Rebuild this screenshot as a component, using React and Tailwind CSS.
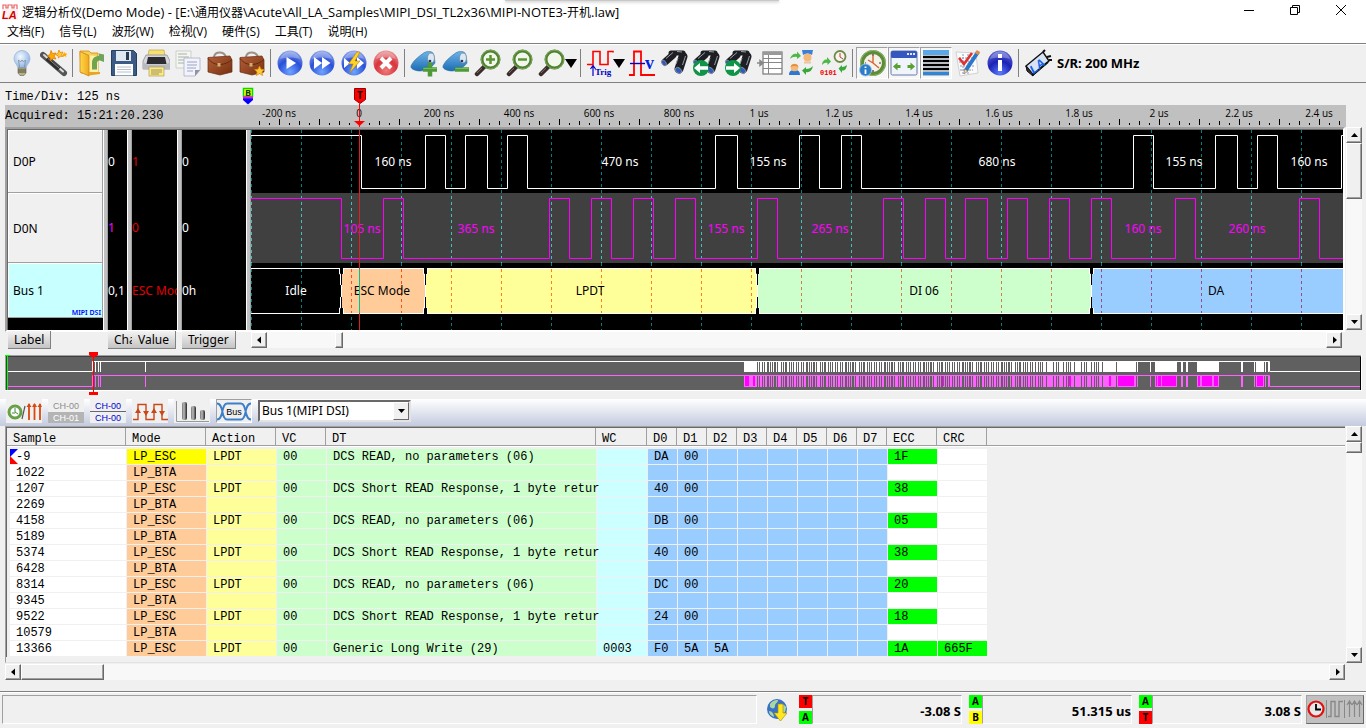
import { useState } from "react";

const UI = "font-['Open_Sans','Noto_Sans_CJK_SC',sans-serif]";
const MONO = "font-['Liberation_Mono','Noto_Sans_CJK_SC',monospace]";
const TAHOMA = "font-['Noto_Sans','Noto_Sans_CJK_SC',sans-serif]";
const RAISED = "border border-t-white border-l-white border-r-[#696969] border-b-[#696969] bg-[#f0f0f0]";
const SUNKEN = "border border-t-[#a0a0a0] border-l-[#a0a0a0] border-r-white border-b-white";

const Defs = () => (
    <svg width="0" height="0" className="absolute" aria-hidden="true">
        <defs>
            <radialGradient id="blueBall" cx="50%" cy="85%" r="85%">
                <stop offset="0" stopColor="#6fa4ff" />
                <stop offset="0.55" stopColor="#2a4fd8" />
                <stop offset="1" stopColor="#8ea6e8" />
            </radialGradient>
            <radialGradient id="redBall" cx="50%" cy="80%" r="85%">
                <stop offset="0" stopColor="#f07a7a" />
                <stop offset="0.5" stopColor="#d8343c" />
                <stop offset="1" stopColor="#eba0a4" />
            </radialGradient>
            <radialGradient id="infoBall" cx="50%" cy="90%" r="95%">
                <stop offset="0" stopColor="#5a7cff" />
                <stop offset="0.5" stopColor="#1c22b4" />
                <stop offset="1" stopColor="#6a74d8" />
            </radialGradient>
            <linearGradient id="brown" x1="0" y1="0" x2="1" y2="1">
                <stop offset="0" stopColor="#b5603a" />
                <stop offset="1" stopColor="#74300f" />
            </linearGradient>
            <linearGradient id="folder" x1="0" y1="0" x2="1" y2="0">
                <stop offset="0" stopColor="#ffd84a" />
                <stop offset="1" stopColor="#f0a81c" />
            </linearGradient>
            <linearGradient id="tag" x1="0" y1="0" x2="0" y2="1">
                <stop offset="0" stopColor="#6db3e8" />
                <stop offset="1" stopColor="#1c6cb4" />
            </linearGradient>
            <radialGradient id="bulb" cx="40%" cy="35%" r="70%">
                <stop offset="0" stopColor="#f4f9ff" />
                <stop offset="1" stopColor="#86aee0" />
            </radialGradient>
            <linearGradient id="bar" x1="0" y1="0" x2="1" y2="0">
                <stop offset="0" stopColor="#777" />
                <stop offset="0.4" stopColor="#bbb" />
                <stop offset="1" stopColor="#222" />
            </linearGradient>
        </defs>
    </svg>
);

const Icon = ({ children, w = 28, h = 28 }) => (
    <svg width={w} height={h} viewBox={`0 0 ${w} ${h}`} className="shrink-0" aria-hidden="true">{children}</svg>
);

const BulbIcon = () => (
    <Icon>
        <path d="M14 1.500a8 8 0 0 1 8 8c0 4-3 5.500-4 9.500h-8c-1-4-4-5.500-4-9.500a8 8 0 0 1 8-8z" fill="url(#bulb)" stroke="#9ab6da" strokeWidth="0.8" />
        <path d="M11.500 18l-1-7 2 2 1.500-2 1.500 2 2-2-1 7" fill="none" stroke="#7a8c9c" strokeWidth="0.8" />
        <path d="M10 19h8v5l-2 2.500h-4L10 24z" fill="#b8b088" stroke="#77755a" strokeWidth="0.7" />
        <path d="M10 21h8M10 23h8" stroke="#4d4c3c" strokeWidth="1" />
    </Icon>
);

const WandIcon = () => (
    <Icon>
        <path d="M3 6L24 24" stroke="#555" strokeWidth="6" strokeLinecap="round" />
        <path d="M4 6L23 22.500" stroke="#ddd" strokeWidth="2" strokeLinecap="round" />
        <path d="M7 9.500l12 10.500" stroke="#2c2c2c" strokeWidth="4" />
        <path d="M8 9.500l11 9.500" stroke="#8a8a8a" strokeWidth="1" />
        <path d="M11 1.500l1.500 3 3.500-.5-2 3 2 3-3.500-.500-2 2.500-.500-3.500-3-1.500 3-1.500z" fill="#ffa800" stroke="#e07c00" strokeWidth="0.8" />
        <path d="M19 1l1 2.500 3-.5-1.500 2.500 1.500 2-3-.3-1.500 2-.5-2.500-2.500-1 2.500-1.500z" fill="#ffc83c" stroke="#e88a00" strokeWidth="0.8" />
        <path d="M24.500 3l1 1.500 2 .3-1.500 1.300.3 2-1.800-1-1.800 1 .3-2-1-1.500 2-.1z" fill="#ffa800" />
    </Icon>
);

const OpenIcon = () => (
    <Icon>
        <path d="M2 2h9l2 2h7v20H3z" fill="#f7cf52" stroke="#d08c10" strokeWidth="0.8" />
        <path d="M7 6l13 1v16l-13 2z" fill="#fff0a8" />
        <path d="M2 2.500l9 4v20.500l-9-4z" fill="url(#folder)" stroke="#c98512" strokeWidth="0.8" />
        <path d="M11 23h11v2l-11 1.500z" fill="#eaa420" />
        <path d="M14 14c0-6 4-7 7-7V4.500l5 1V13l-4-1.500c-3 0-3 2-3 4v5h-5z" fill="#57983e" opacity="0.85" />
    </Icon>
);

const SaveIcon = () => (
    <Icon>
        <path d="M1.500 1.500h22l3 3v22h-25z" fill="#3c5a84" stroke="#24405f" strokeWidth="1" />
        <rect x="6" y="2" width="15" height="10" fill="#dfe7f0" />
        <rect x="16" y="3" width="3" height="8" fill="#2a3c54" />
        <rect x="5" y="15" width="18" height="11.500" fill="#fdfdfd" />
        <path d="M7 18h14M7 20.500h14M7 23h14" stroke="#b8c2cc" strokeWidth="1" />
    </Icon>
);

const PrinterIcon = () => (
    <Icon>
        <path d="M7 1h15l1 6H6z" fill="#f6df73" stroke="#b89a30" strokeWidth="0.6" />
        <path d="M4 6h21l3 6v8H1v-8z" fill="#d6d6da" stroke="#8e8e94" strokeWidth="0.8" />
        <path d="M6 8h17l1.500 7H4.500z" fill="#2b2d33" />
        <path d="M1 13v7h27v-7l-4 2.500H5z" fill="#b9bac0" />
        <rect x="7" y="18" width="15" height="9" fill="#f8e888" stroke="#a8924a" strokeWidth="0.6" />
        <path d="M9 21h11M9 23h11M9 25h8" stroke="#8a8248" strokeWidth="0.8" />
    </Icon>
);

const CopyIcon = () => (
    <Icon>
        <path d="M2 2h15v17H2z" fill="#f4f6f2" stroke="#c4c8c0" strokeWidth="0.8" />
        <path d="M4 5h9M4 8h11M4 11h8M4 14h8" stroke="#aab0a8" strokeWidth="1" />
        <path d="M10 9h16v12l-5 6H10z" fill="#f3f4fb" stroke="#a8aec8" strokeWidth="0.8" />
        <path d="M13 13h10M13 16h10M13 19h9M13 22h6" stroke="#9aa2c4" strokeWidth="1" />
        <path d="M26 21h-5v6z" fill="#8f94a4" />
    </Icon>
);

const BriefcaseIcon = ({ star }) => (
    <Icon>
        <path d="M8 8c1-6 10-6 12 0" fill="none" stroke="#9c9088" strokeWidth="2" />
        <path d="M2 8.500l22-1.500 2 4v12l-12 3-12-3z" fill="url(#brown)" stroke="#6a2c10" strokeWidth="0.7" />
        <path d="M2 9.500c4 5 8 6 12 6s9-2 12-5" fill="none" stroke="#60260c" strokeWidth="0.9" />
        <rect x="11.500" y="14" width="3" height="3.500" fill="#cfb070" />
        {star && <path d="M21.500 17l1.500 3.200 3.500.3-2.600 2.400.8 3.600-3.200-1.900-3.200 1.900.8-3.600-2.600-2.400 3.500-.3z" fill="#ffc83a" stroke="#d88a00" strokeWidth="0.7" />}
    </Icon>
);

const Ball = ({ fill = "url(#blueBall)", children }) => (
    <Icon>
        <circle cx="14" cy="14" r="12.500" fill={fill} />
        <path d="M4 10c3-10 17-10 20 0-6-2-14-2-20 0z" fill="#fff" opacity="0.28" />
        {children}
    </Icon>
);

const TagIcon = ({ plus }) => (
    <Icon>
        <path d="M1 17c2-5 7-9 12-12.500 3-2.500 8-2.500 10-.5 1 1 2 8 2 10-3 4-8 8-15 8-4 0-10-2-9-5z" fill="url(#tag)" stroke="#2d6fa8" strokeWidth="0.6" />
        <ellipse cx="21" cy="9" rx="3.500" ry="5" fill="#d8e8f4" stroke="#7d8d9c" strokeWidth="0.8" />
        <circle cx="20" cy="12" r="1.300" fill="#335" />
        <path d="M13 20.500h14" stroke="#4f9a38" strokeWidth="4.500" />
        {plus && <path d="M20 13.500v14" stroke="#4f9a38" strokeWidth="4.500" />}
        <path d="M13.500 19.500h13" stroke="#79bb5a" strokeWidth="1" />
    </Icon>
);

const ZoomIcon = ({ sign }) => (
    <Icon>
        <path d="M3 25l8-8" stroke="#3a2d2a" strokeWidth="4.500" strokeLinecap="round" />
        <path d="M3 24l5-5" stroke="#7c6a64" strokeWidth="1" />
        <circle cx="16.500" cy="10.500" r="8.500" fill="#f2f7ec" stroke="#4e8030" strokeWidth="3" />
        <circle cx="16.500" cy="10.500" r="9.300" fill="none" stroke="#85b065" strokeWidth="0.8" />
        {sign && <path d={sign === "+" ? "M12 10.500h9M16.500 6v9" : "M12 10.500h9"} stroke="#5b9434" strokeWidth="2.500" />}
    </Icon>
);

const TrigIcon = () => (
    <Icon>
        <path d="M1 15.500h6V2.500h7v13h8V2.500h5v1" fill="none" stroke="#f00" strokeWidth="1.600" />
        <path d="M7 27V17M4.500 20L7 16.500 9.500 20" fill="none" stroke="#0000c8" strokeWidth="1.200" />
        <text x="9" y="26" fontSize="9" fontWeight="bold" fill="#0000c8" className="font-['Liberation_Serif',serif]">Trig</text>
    </Icon>
);

const VoltIcon = () => (
    <Icon>
        <path d="M1 26h5V2.500h7V26h14" fill="none" stroke="#f00" strokeWidth="1.800" />
        <path d="M2 14.500h15" stroke="#0000c8" strokeWidth="1.400" />
        <text x="17" y="20" fontSize="18" fontWeight="bold" fill="#0020e0" className="font-['Liberation_Serif',serif]">v</text>
    </Icon>
);

const BinocularIcon = ({ dir }) => (
    <Icon>
        <path d="M13 6L5 13" stroke="#1d1f24" strokeWidth="7" strokeLinecap="round" />
        <path d="M11 4h12" stroke="#1d1f24" strokeWidth="5" strokeLinecap="round" />
        <path d="M23 7.500L19 20" stroke="#1d1f24" strokeWidth="9" strokeLinecap="round" />
        <path d="M13 3.500L6 9.500M17 2.500l5 .5M25.500 7l-3 9M18 9l-2 6" stroke="#9aa0a8" strokeWidth="1" fill="none" />
        <ellipse cx="4" cy="14" rx="2" ry="3.200" transform="rotate(-35 4 14)" fill="#3858b8" stroke="#9aa" strokeWidth="0.6" />
        <ellipse cx="18.500" cy="21.500" rx="2.600" ry="3.600" transform="rotate(-50 18.500 21.500)" fill="#3858b8" stroke="#9aa" strokeWidth="0.7" />
        {dir && (
            <>
                <circle cx="9" cy="19" r="8" fill="#0f9448" />
                <path d={dir === "left" ? "M2 19l6-5v3.200h8v3.600H8V24z" : "M16 19l-6-5v3.200H2v3.600h8V24z"} fill="#fff" />
            </>
        )}
    </Icon>
);

const TableIcon = () => (
    <Icon>
        <rect x="7" y="3" width="19" height="22" fill="#fff" stroke="#777" strokeWidth="1.200" />
        <path d="M7 4.500h19" stroke="#999" strokeWidth="3" />
        <path d="M7 9.500h19M7 13.500h19M7 19.500h19M12.500 6v19" stroke="#888" strokeWidth="1" />
        <path d="M1 14h4M4 11.500L7 14l-3 2.500z" stroke="#888" fill="#888" strokeWidth="1.500" />
    </Icon>
);

const Person = ({ x, y }) => (
    <g transform={`translate(${x} ${y})`}>
        <path d="M0 12c0-4 2-5 5.500-5S11 8 11 12z" fill="#2f78d0" />
        <circle cx="5.500" cy="4.500" r="3.800" fill="#f6b878" />
        <path d="M1.500 4C2 0 9 0 9.500 4 7 2.500 4 2.500 1.500 4z" fill="#e09040" />
    </g>
);

const UsersIcon = () => (
    <Icon>
        <path d="M14 1h11l-1 5c-3-2-6-2-9 0z" fill="#3a80d8" />
        <circle cx="19.500" cy="8.500" r="4" fill="#f6b878" />
        <path d="M16 12.500h7v2h-7z" fill="#e9c49c" />
        <Person x={1} y={14} />
        <path d="M2 10c1-4 4-6 7-5V2.500L13 7l-4 3V8C6 7.500 4 8.500 2 10z" fill="#4db848" />
        <path d="M25 17c-1 5-4 7-7 6v3l-4-4.500 4-3.500v2c3 0 5-1 7-3z" fill="#3aa838" />
    </Icon>
);

const ClockDataIcon = () => (
    <Icon>
        <circle cx="20" cy="7.500" r="5.500" fill="#f6f6ee" stroke="#6a8c48" strokeWidth="1.800" />
        <path d="M20 4v4l3 2" fill="none" stroke="#c33" strokeWidth="1" />
        <path d="M2 16c0-4 3-6 5-5.500V8l4 4.500L7.500 16v-2C5 13.500 4 14 2 16z" fill="#4db848" />
        <path d="M27 16c-1 5-3 6-5 5.500V24l-3.500-4.500L22 16v2c2 0 3-1 5-2z" fill="#3aa838" />
        <text x="0" y="26" fontSize="7" fontWeight="bold" fill="#e00" className="font-['Liberation_Mono',monospace]">0101</text>
    </Icon>
);

const ClockInfoIcon = () => (
    <Icon>
        <circle cx="15" cy="14" r="11" fill="#f4f2e8" stroke="#5c8c38" strokeWidth="4" />
        <circle cx="15" cy="14" r="12.500" fill="none" stroke="#9cc078" strokeWidth="0.8" />
        <path d="M15 6v8l6 5M15 14l-5-3" fill="none" stroke="#d86038" strokeWidth="1.400" />
        <path d="M15 5v1.500M23 14h-2M7 14h1M15 21v2" stroke="#333" strokeWidth="1.200" />
        <circle cx="7.500" cy="21" r="6" fill="#2d7cc8" stroke="#9cc6ec" strokeWidth="0.8" />
        <path d="M7.500 17.500v1.500M7.500 20.500v4.500" stroke="#fff" strokeWidth="1.800" />
    </Icon>
);

const WindowIcon = () => (
    <Icon>
        <rect x="1" y="2" width="26" height="24" rx="1.500" fill="#f0f4fb" stroke="#6878a8" strokeWidth="1" />
        <rect x="1" y="2" width="26" height="7" rx="1.500" fill="#3558c0" />
        <path d="M17 5h2M20 5h2M23 5h2" stroke="#dfe8ff" strokeWidth="2" />
        <path d="M3 17.500l4.500-4v2.500h3v3h-3v2.500zM25 17.500l-4.500-4v2.500h-3v3h3v2.500z" fill="#58a030" />
    </Icon>
);

const StripeIcon = () => (
    <Icon>
        <rect x="1" y="1" width="26" height="26" fill="#b8bcc0" />
        <rect x="1" y="1" width="26" height="5" fill="#5aa8e8" />
        <path d="M1 8h26M1 12h26M1 16h26M1 20h26" stroke="#000" strokeWidth="2" />
        <path d="M1 24.500h26" stroke="#2e86d8" strokeWidth="3" />
    </Icon>
);

const CheckNoteIcon = () => (
    <Icon>
        <path d="M2 3l20 1 2 20-18 3z" fill="#fafafa" stroke="#c8c8cc" strokeWidth="0.8" />
        <path d="M5 9h14M5 13h15M6 17h14M6 21h13M9 5v20M14 5v20" stroke="#8c96b0" strokeWidth="1" strokeDasharray="2 1" />
        <path d="M5 9l5 6 8-11" fill="none" stroke="#e03030" strokeWidth="2.600" />
        <path d="M24 3L12 21" stroke="#2a78c8" strokeWidth="4" />
        <path d="M24.500 2l-2 3" stroke="#e08a50" strokeWidth="4" />
        <path d="M10.500 20l3.500 2-4 3z" fill="#f4d8a0" stroke="#555" strokeWidth="0.5" />
    </Icon>
);

const ChipIcon = () => (
    <Icon>
        <path d="M2 17L19 3l6 9-16 14z" fill="#d8e2f4" stroke="#111" strokeWidth="1.400" />
        <path d="M2 17l1 5 6 5V25z" fill="#334" stroke="#111" strokeWidth="1" />
        <path d="M19 3l2-2M25 11h3M23 8l4-1M8 26.500l16-13.500" stroke="#111" strokeWidth="2" />
        <text x="5" y="22" fontSize="12" fontWeight="bold" fontStyle="italic" fill="#1060e8" transform="rotate(-38 12 17)" className="font-['Liberation_Sans',sans-serif]">LA</text>
    </Icon>
);

const ToolButton = ({ label, pressed, children, arrow }) => (
    <button
        type="button"
        aria-label={label}
        className={`h-8 shrink-0 flex items-center ${arrow ? "w-[42px] pl-[2px]" : "w-8 justify-center"} ${pressed ? "border border-t-[#a0a0a0] border-l-[#a0a0a0] border-r-white border-b-white bg-[#f6f6f6]" : ""}`}
    >
        {children}
        {arrow && <svg width="12" height="9" className="shrink-0 -ml-px" aria-hidden="true"><path d="M0 0h12L6 9z" fill="#000" /></svg>}
    </button>
);

const ToolSep = () => <div className="w-[6px] h-7 shrink-0 pl-[2px]"><div className="w-px h-full bg-[#808080]" /></div>;

const ARROWS = {
    up: "M0 5h7L3.500 1z",
    down: "M0 1h7L3.500 5z",
    left: "M5 -0.500v7L1 3z",
    right: "M2 -0.500v7L6 3z",
};

const ScrollArrow = ({ dir }) => (
    <button type="button" aria-label={`Scroll ${dir}`} className={`size-4 shrink-0 flex items-center justify-center shadow-[inset_-1px_-1px_#a0a0a0] ${RAISED}`}>
        <svg width="7" height="6" aria-hidden="true" className="overflow-visible"><path d={ARROWS[dir]} fill="#000" /></svg>
    </button>
);

const Thumb = ({ className }) => <div className={`shrink-0 shadow-[inset_-1px_-1px_#a0a0a0] ${RAISED} ${className}`} />;

const MENUS = ["文档(F)", "信号(L)", "波形(W)", "检视(V)", "硬件(S)", "工具(T)", "说明(H)"];

const TitleBar = () => (
    <header className="bg-white relative">
        <div className="absolute top-0 left-[37%] w-1/5 h-px bg-[#c8c8c8] shadow-[0_1px_3px_#999]" />
        <div className="flex items-center h-6">
            <svg width="16" height="16" viewBox="0 0 16 16" className="ml-[2px] mr-1 shrink-0" aria-hidden="true">
                <path d="M1 5V1h3v3h2V1h4v3h2V1h3v4" fill="none" stroke="#e86060" strokeWidth="1.200" />
                <rect x="0" y="5" width="16" height="11" fill="#fff0f0" />
                <text x="0" y="15" fontSize="11" fontStyle="italic" fontWeight="bold" fill="#d00000" className="font-['Liberation_Sans',sans-serif]">LA</text>
            </svg>
            <h1 className={`${UI} text-[13px] leading-5 whitespace-nowrap`}>
                <span className="text-xs">逻辑分析仪</span>(Demo Mode) - [E:\<span className="text-xs">通用仪器</span>\Acute\All_LA_Samples\MIPI_DSI_TL2x36\MIPI-NOTE3-<span className="text-xs">开机</span>.law]
            </h1>
            <div className="ml-auto flex -mt-1 mr-[2px]">
                <button type="button" aria-label="Minimize" className="w-[46px] h-5 flex items-center justify-center">
                    <svg width="12" height="12"><path d="M1 6.500h10" stroke="#000" /></svg>
                </button>
                <button type="button" aria-label="Restore" className="w-[46px] h-5 flex items-center justify-center">
                    <svg width="12" height="12"><path d="M1.500 3.500h7v7h-7zM3.500 3.500v-2h7v7h-2" fill="none" stroke="#000" /></svg>
                </button>
                <button type="button" aria-label="Close" className="w-[46px] h-5 flex items-center justify-center">
                    <svg width="12" height="12"><path d="M1 1l10 10M11 1L1 11" stroke="#000" /></svg>
                </button>
            </div>
        </div>
        <nav className={`${UI} text-xs leading-4 h-[19px] flex items-start gap-[15px] pl-[7px]`}>
            {MENUS.map((m) => <button key={m} type="button" className="shrink-0">{m}</button>)}
        </nav>
    </header>
);

const Toolbar = () => (
    <div className="h-10 flex items-center pl-[6px] border-y border-[#808080] shadow-[inset_0_1px_#fff]">
        <ToolButton label="Tip"><BulbIcon /></ToolButton>
        <ToolButton label="Wizard"><WandIcon /></ToolButton>
        <ToolSep />
        <ToolButton label="Open"><OpenIcon /></ToolButton>
        <ToolButton label="Save"><SaveIcon /></ToolButton>
        <ToolButton label="Print"><PrinterIcon /></ToolButton>
        <ToolButton label="Copy"><CopyIcon /></ToolButton>
        <ToolButton label="Workspace"><BriefcaseIcon /></ToolButton>
        <ToolButton label="Default workspace"><BriefcaseIcon star /></ToolButton>
        <ToolSep />
        <ToolButton label="Run"><Ball><path d="M10.500 8l9.500 6-9.500 6z" fill="#fff" /></Ball></ToolButton>
        <ToolButton label="Repeat"><Ball><path d="M6 8l8 6-8 6zM14 8l8.500 6-8.500 6z" fill="#fff" /></Ball></ToolButton>
        <ToolButton label="Quick run">
            <Ball>
                <path d="M4 9l6 5-6 5zM17 8l7 6-7 6z" fill="#fff" />
                <path d="M17 3L8.500 15h4.500L9.500 24 20 12h-5l5-9z" fill="#ffd428" stroke="#c08000" strokeWidth="0.6" />
            </Ball>
        </ToolButton>
        <ToolButton label="Stop"><Ball fill="url(#redBall)"><path d="M9 9l10 10M19 9L9 19" stroke="#fff" strokeWidth="4" /></Ball></ToolButton>
        <ToolSep />
        <ToolButton label="Add cursor"><TagIcon plus /></ToolButton>
        <ToolButton label="Remove cursor"><TagIcon /></ToolButton>
        <ToolButton label="Zoom in"><ZoomIcon sign="+" /></ToolButton>
        <ToolButton label="Zoom out"><ZoomIcon sign="-" /></ToolButton>
        <ToolButton label="Zoom" arrow><ZoomIcon /></ToolButton>
        <ToolSep />
        <ToolButton label="Trigger" arrow><TrigIcon /></ToolButton>
        <ToolButton label="Threshold"><VoltIcon /></ToolButton>
        <ToolButton label="Find"><BinocularIcon /></ToolButton>
        <ToolButton label="Find previous"><BinocularIcon dir="left" /></ToolButton>
        <ToolButton label="Find next"><BinocularIcon dir="right" /></ToolButton>
        <ToolButton label="Report"><TableIcon /></ToolButton>
        <ToolButton label="Swap"><UsersIcon /></ToolButton>
        <ToolButton label="State list"><ClockDataIcon /></ToolButton>
        <ToolSep />
        <ToolButton label="Timing" pressed><ClockInfoIcon /></ToolButton>
        <ToolButton label="Fit window" pressed><WindowIcon /></ToolButton>
        <ToolButton label="Stripes" pressed><StripeIcon /></ToolButton>
        <ToolButton label="Notes"><CheckNoteIcon /></ToolButton>
        <ToolButton label="About">
            <Ball fill="url(#infoBall)"><path d="M14 5v4M14 11v11" stroke="#fff" strokeWidth="4" /></Ball>
        </ToolButton>
        <ToolSep />
        <ToolButton label="Device"><ChipIcon /></ToolButton>
        <span className={`${TAHOMA} text-[13px] font-bold ml-[3px] pt-px whitespace-nowrap`}>S/R: 200 MHz</span>
    </div>
);

// tick marks are 10px (25 ns) apart, x = 359 is the trigger at 0
const TICKS = Array.from({ length: 109 }, (_, i) => 259 + i * 10);
const RULER_LABELS = ["-200 ns", "0", "200 ns", "400 ns", "600 ns", "800 ns", "1 us", "1.2 us", "1.4 us", "1.6 us", "1.8 us", "2 us", "2.2 us", "2.4 us"];

const tickHeight = (x) => {
    if ((x - 279) % 40 === 0) return 6;
    return (x - 279) % 20 === 0 ? 4 : 2;
};

const Ruler = () => (
    <div className={`${MONO} text-xs flex pl-[5px] pr-5`}>
        <div className="w-[230px] shrink-0">
            <p className="h-[22px] leading-[28px]">Time/Div: 125 ns</p>
            <p className="h-[22px] leading-[22px] bg-[#c0c0c0]">Acquired: 15:21:20.230</p>
        </div>
        <svg height="44" className="flex-1 min-w-0 overflow-hidden" role="img" aria-label="Time ruler">
            <rect y="22" width="100%" height="22" fill="#c0c0c0" />
            <g transform="translate(-235 -83)" className={UI}>
                {TICKS.map((x) => <path key={x} d={`M${x + 0.5} 125v${-tickHeight(x)}`} stroke="#000" />)}
                {RULER_LABELS.map((t, i) => <text key={t} x={279 + i * 80} y="117" fontSize="10" textAnchor="middle">{t}</text>)}
                <path d="M243 98h10v2l-5 4.500-5-4.500z" fill="#00f" />
                <path d="M243.500 88.500h9v8h-9z" fill="#ff0" stroke="#0d0" strokeWidth="1.500" />
                <path d="M243 97.500h10" stroke="#f0f" strokeWidth="2" />
                <text x="245" y="96" fontSize="9" fontWeight="bold" fill="#040">B</text>
                <path d="M354.500 88.500h11v11l-5.500 4-5.500-4z" fill="#f00" stroke="#900" />
                <text x="357" y="99" fontSize="10" fontWeight="bold">T</text>
                <path d="M359.500 104v23" stroke="#f00" />
                <path d="M354 121h11l-5.500 5z" fill="#f00" />
            </g>
        </svg>
    </div>
);

const CHANNELS = [
    { label: "D0P", ch: "0", value: "1", trigger: "0", h: "h-[63px]", chColor: "text-white" },
    { label: "D0N", ch: "1", value: "0", trigger: "0", h: "h-[70px]", chColor: "text-[#f0f]" },
    { label: "Bus 1", ch: "0,1", value: "ESC Mode", trigger: "0h", h: "h-[55px]", chColor: "text-white" },
];

const D0P_EDGES = [361, 425, 445, 465, 487, 507, 527, 715, 737, 799, 819, 841, 861, 1133, 1153, 1215, 1237, 1257, 1277, 1341];
const D0N_EDGES = [341, 383, 403, 549, 569, 591, 611, 633, 653, 675, 695, 757, 777, 883, 903, 925, 945, 965, 987, 1007, 1027, 1049, 1069, 1091, 1111, 1175, 1195, 1299, 1319];
const D0P_TIMES = [[393, "160 ns"], [620, "470 ns"], [768, "155 ns"], [997, "680 ns"], [1184, "155 ns"], [1309, "160 ns"]];
const D0N_TIMES = [[362, "105 ns"], [476, "365 ns"], [726, "155 ns"], [830, "265 ns"], [1143, "160 ns"], [1247, "260 ns"]];
const BUS = [
    { x: 250, end: 341, fill: "#000", grid: "#008080", text: "Idle", at: 296, color: "#fff" },
    { x: 341, end: 425, fill: "#ffcc99", grid: "#ff4c19", text: "ESC Mode", at: 382, color: "#000" },
    { x: 425, end: 757, fill: "#ffff99", grid: "#ff7f19", text: "LPDT", at: 590, color: "#000" },
    { x: 757, end: 1091, fill: "#ccffcc", grid: "#cc7f4c", text: "DI 06", at: 924, color: "#000" },
    { x: 1091, end: 1343, fill: "#99ccff", grid: "#994c7f", text: "DA", at: 1216, color: "#000" },
];
const GRID = Array.from({ length: 22 }, (_, i) => 251 + i * 50);

const edgePath = (edges, high, low) => {
    let level = high;
    let d = `M250 ${high + 0.5}`;
    edges.forEach((x) => {
        level = level === high ? low : high;
        d += `H${x + 0.5}V${level + 0.5}`;
    });
    return `${d}H1344`;
};

const GridLines = ({ from, to, color, y1, y2 }) => (
    <g stroke={color} strokeDasharray="3 3">
        {GRID.filter((x) => x >= from && x < to).map((x) => <path key={x} d={`M${x + 0.5} ${y1}V${y2}`} />)}
    </g>
);

const WaveCanvas = () => (
    <svg className={`${TAHOMA} flex-1 min-w-0 h-[200px] bg-black`} role="img" aria-label="Waveforms">
        <g transform="translate(-251 -130)" fontSize="12" textAnchor="middle" fill="none">
            <rect x="251" y="193" width="1092" height="70" fill="#404040" />
            <GridLines from={251} to={1343} color="#008080" y1={130} y2={193} />
            <GridLines from={251} to={1343} color="#40c0c0" y1={196} y2={263} />
            <GridLines from={251} to={1343} color="#008080" y1={263} y2={330} />
            <path d={edgePath(D0P_EDGES, 135, 188)} stroke="#fff" />
            <path d={edgePath(D0N_EDGES, 198, 258)} stroke="#f0f" />
            {D0P_TIMES.map(([x, t]) => <text key={x} x={x} y="166" fill="#fff">{t}</text>)}
            {D0N_TIMES.map(([x, t]) => <text key={x} x={x} y="233" fill="#f0f">{t}</text>)}
            {BUS.map((b) => (
                <g key={b.text}>
                    <rect x={b.x} y="268" width={b.end - b.x} height="46" fill={b.fill} />
                    <path d={`M${b.x} 268.500H${b.end}M${b.x} 313.500H${b.end}`} stroke="#fff" />
                    <GridLines from={b.x + 1} to={b.end} color={b.grid} y1={269} y2={313} />
                    <text x={b.at} y="295" fill={b.color}>{b.text}</text>
                </g>
            ))}
            {BUS.slice(1).map((b) => (
                <g key={b.x}>
                    <path d={`M${b.x + 0.5} 268v6M${b.x + 0.5} 308v6`} stroke="#000" strokeWidth="3" />
                    <path d={`M${b.x - 1.5} 268v6h1v11M${b.x - 1.5} 314v-6h1v-11M${b.x + 2.5} 268v6M${b.x + 2.5} 314v-6M${b.x + 0.5} 285v12`} stroke="#fff" />
                    <path d={`M${b.x + 0.5} 274v11M${b.x + 0.5} 297v11`} stroke="#000" />
                </g>
            ))}
            <path d="M359.500 130V330" stroke="#e02020" />
            <path d="M359.500 269V313" stroke="#00c090" />
        </g>
    </svg>
);

const Splitter = () => <div className="w-[5px] shrink-0 bg-[#c0c0c0] border-l border-l-white border-r border-r-[#a0a0a0]" />;

const ValueColumn = ({ className, field, color }) => (
    <div className={`shrink-0 overflow-hidden bg-black ${className}`}>
        {CHANNELS.map((c) => (
            <div key={c.label} className={`${c.h} flex items-center whitespace-nowrap ${color || c.chColor}`}>{c[field]}</div>
        ))}
    </div>
);

const HeaderButton = ({ children, className }) => (
    <div className={`shrink-0 overflow-hidden h-[18px] ${className}`}>
        <button type="button" className="h-[18px] px-[6px] leading-[18px] bg-linear-to-b from-[#f4f4f4] to-[#c4c4c4] border-r border-b border-[#808080]">
            {children}
        </button>
    </div>
);

const WavePanel = () => (
    <section className={`${TAHOMA} text-xs pl-[5px] pr-1`}>
        <div className="flex">
            <div className="flex-1 min-w-0 flex border-2 border-t-[#a0a0a0] border-l-[#a0a0a0] border-r-white border-b-white">
                <div className="flex-1 min-w-0 flex h-[201px] border-t border-l border-[#696969] bg-black">
                    <div className="w-[95px] shrink-0">
                        {CHANNELS.map((c, i) => (
                            <div
                                key={c.label}
                                className={`${c.h} relative flex items-center pt-[2px] pl-[5px] border-b border-r border-[#a0a0a0] shadow-[inset_1px_1px_#fff] ${i === 2 ? "bg-[#c8ffff]" : "bg-[#f0f0f0]"}`}
                            >
                                {c.label}
                                {i === 2 && <span className="absolute right-px bottom-0 text-[7px] leading-2 font-semibold text-[#00f]">MIPI DSI</span>}
                            </div>
                        ))}
                    </div>
                    <Splitter />
                    <ValueColumn className="w-[19px]" field="ch" />
                    <Splitter />
                    <ValueColumn className="w-[45px]" field="value" color="text-[#e00000]" />
                    <Splitter />
                    <ValueColumn className="w-16" field="trigger" color="text-white" />
                    <Splitter />
                    <WaveCanvas />
                </div>
            </div>
            <div className="w-4 ml-px shrink-0 flex flex-col bg-[#f8f8f8] h-[203px]">
                <ScrollArrow dir="up" />
                <Thumb className="h-14" />
                <div className="mt-auto" />
                <ScrollArrow dir="down" />
            </div>
        </div>
        <div className="flex pl-[3px] pr-5 -mt-px">
            <HeaderButton className="w-[100px]">Label</HeaderButton>
            <HeaderButton className="w-6">Cha</HeaderButton>
            <HeaderButton className="w-[50px]">Value</HeaderButton>
            <HeaderButton className="w-[69px]">Trigger</HeaderButton>
            <div className="flex-1 min-w-0 flex bg-[#f8f8f8] h-4 mt-px">
                <ScrollArrow dir="left" />
                <Thumb className="w-2 ml-[68px]" />
                <div className="ml-auto" />
                <ScrollArrow dir="right" />
            </div>
        </div>
    </section>
);

// run lengths of alternating filled / empty columns in the capture overview
const EARLY_RUNS = [1, 1, 2, 1, 1, 1, 2, 2, 1, 1, 1, 1, 1, 2, 1, 1, 3, 1, 1, 1, 1, 2, 2, 1, 1, 1, 1, 1, 2, 1];
const LATE_RUNS = [2, 1, 1, 1, 4, 1, 2, 1, 1, 1, 1, 1, 3, 1, 6, 1];

const buildBars = () => {
    const bars = [[744, 13]];
    let x = 758;
    let i = 0;
    while (x < 1108) {
        const runs = x < 1035 ? EARLY_RUNS : LATE_RUNS;
        const on = runs[i % runs.length];
        bars.push([x, on]);
        x += on + runs[(i + 1) % runs.length];
        i += 2;
    }
    return bars.concat([[1108, 8], [1117, 19], [1137, 1], [1150, 1], [1155, 22], [1181, 2], [1186, 2], [1197, 22], [1241, 2], [1254, 1], [1256, 8], [1265, 1], [1268, 1]]);
};
const BARS = buildBars();
const PINK = [[745, 4], [753, 2], [943, 1], [1069, 2], [1109, 2], [1118, 16], [1156, 1], [1158, 3], [1162, 14], [1198, 2], [1202, 10], [1214, 4], [1257, 6]];

const Overview = () => (
    <section className="mt-[2px] pl-[5px] pr-1">
        <svg height="45" className="w-full" role="img" aria-label="Capture overview">
            <rect y="4" width="100%" height="36" fill="#606060" />
            <path d="M0 4.500H1357M0.500 4V40" stroke="#a0a0a0" />
            <path d="M1 5.500H1356M1.500 5V39" stroke="#404040" />
            <path d="M0 39.500H1357M1356.500 4V40" stroke="#fff" />
            <g transform="translate(-5 -351)" fill="none">
                <path d="M8 371.500H92.500V361.500H1269.500V371.500H1360" stroke="#fff" />
                <path d="M8 386.500H92.500V375.500H1269.500V386.500H1360" stroke="#ff60ff" />
                <path d="M95.500 361v11M98.500 361v11M100.500 361v11M145.500 361v11" stroke="#fff" />
                <path d="M95.500 375v12M98.500 375v12M100.500 375v12M145.500 375v12" stroke="#ff60ff" />
                {BARS.map(([x, w]) => (
                    <g key={x}>
                        <rect x={x} y="361" width={w} height="11" fill="#fff" />
                        <rect x={x} y="375" width={w} height="12" fill="#ff60ff" />
                    </g>
                ))}
                {PINK.map(([x, w]) => <rect key={x} x={x} y="376" width={w} height="10" fill="#f0f" />)}
                <path d="M1360.500 357v33" stroke="#000" />
                <path d="M7.500 356v34M5 355.500h5" stroke="#0f0" />
                <path d="M93.500 354v38" stroke="#f00" />
                <path d="M89 352h9v3l-4.500 3-4.500-3zM89 392h9v3h-9z" fill="#f00" />
            </g>
        </svg>
    </section>
);

const BusToolbar = () => {
    const [bus, setBus] = useState("Bus 1(MIPI DSI)");
    const sans = "font-['Liberation_Sans',sans-serif]";
    const btn = "w-9 h-6 shrink-0 bg-[#f0f0f0]";
    return (
        <div className="h-[27px] mt-[3px] flex gap-[6px] pl-[6px] bg-linear-to-b from-white to-[#c4cbdf]">
            <button type="button" aria-label="Clock mode" className={btn}>
                <Icon w={36} h={24}>
                    <circle cx="9" cy="13" r="6" fill="#fff" stroke="#68a048" strokeWidth="3" />
                    <path d="M9 9v4l3 2M6 14h3" fill="none" stroke="#484" strokeWidth="1" />
                    <path d="M16 20l3-13" stroke="#555" strokeWidth="1.200" />
                    <path d="M23 21V5M28.500 21V5M34 21V5" stroke="#d84810" strokeWidth="1.800" />
                    <path d="M20.500 8L23 4l2.500 4zM26 8l2.500-4L31 8zM31.500 8L34 4l2 4z" fill="#d84810" />
                </Icon>
            </button>
            <button type="button" aria-label="Single channel" className={btn}>
                <Icon w={36} h={24}>
                    <rect y="13" width="36" height="11" fill="#b4b4b4" />
                    <text x="18" y="10" fontSize="9" textAnchor="middle" fill="#8c8c8c" className={sans}>CH-00</text>
                    <text x="18" y="22" fontSize="9" textAnchor="middle" fill="#fff" className={sans}>CH-01</text>
                </Icon>
            </button>
            <button type="button" aria-label="Same channel" className={btn}>
                <Icon w={36} h={24}>
                    <path d="M0 12.500h36" stroke="#667" />
                    <text x="18" y="10" fontSize="9" textAnchor="middle" fill="#0000d0" className={sans}>CH-00</text>
                    <text x="18" y="22" fontSize="9" textAnchor="middle" fill="#0000d0" className={sans}>CH-00</text>
                </Icon>
            </button>
            <button type="button" aria-label="Edges" className={btn}>
                <Icon w={36} h={24}>
                    <path d="M1 20.500h5V5.500h8v15h8V5.500h8v15h6" fill="none" stroke="#c84818" strokeWidth="1.400" />
                    <path d="M3 14l3-5 3 5zM19 14l3-5 3 5zM11 12l3 5 3-5zM27 12l3 5 3-5z" fill="#c84818" />
                </Icon>
            </button>
            <button type="button" aria-label="Statistics" className={btn}>
                <Icon w={36} h={24}>
                    <path d="M2.500 2v20.500H35" fill="none" stroke="#999" />
                    <rect x="8" y="3" width="5" height="18" rx="2" fill="url(#bar)" />
                    <rect x="17" y="7" width="5" height="14" rx="2" fill="url(#bar)" />
                    <rect x="26" y="11" width="5" height="10" rx="2" fill="url(#bar)" />
                </Icon>
            </button>
            <button type="button" aria-label="Bus view" className={`${btn} ${SUNKEN}`}>
                <Icon w={34} h={22}>
                    <path d="M0 3.500c7 0 4 16 10 16h14c6 0 3-16 10-16M0 19.500c7 0 4-16 10-16h14c6 0 3 16 10 16" fill="none" stroke="#3c80c8" strokeWidth="1.800" />
                    <text x="17" y="15" fontSize="9" textAnchor="middle" className={sans}>Bus</text>
                </Icon>
            </button>
            <div className={`${TAHOMA} relative w-[153px] h-[22px] mt-px bg-white border-2 border-t-[#696969] border-l-[#696969] border-r-[#e3e3e3] border-b-[#e3e3e3]`}>
                <select
                    aria-label="Bus"
                    value={bus}
                    onChange={(e) => setBus(e.target.value)}
                    className="appearance-none block w-full h-[18px] leading-[18px] text-xs pl-[2px] outline-none"
                >
                    <option>Bus 1(MIPI DSI)</option>
                </select>
                <span className={`absolute right-0 top-0 w-4 h-[18px] flex items-center justify-center pointer-events-none ${RAISED}`}>
                    <svg width="7" height="6" aria-hidden="true"><path d={ARROWS.down} fill="#000" /></svg>
                </span>
            </div>
        </div>
    );
};

const COLUMNS = [
    ["Sample", "w-[119px]"], ["Mode", "w-20"], ["Action", "w-[70px]"], ["VC", "w-[50px]"], ["DT", "w-[270px]"], ["WC", "w-[51px]"],
    ["D0", "w-[30px]"], ["D1", "w-[30px]"], ["D2", "w-[30px]"], ["D3", "w-[30px]"], ["D4", "w-[30px]"], ["D5", "w-[30px]"], ["D6", "w-[30px]"], ["D7", "w-[30px]"],
    ["ECC", "w-[50px]"], ["CRC", "w-[50px]"],
];

const READ = "DCS READ, no parameters (06)";
const RESPONSE = "DCS Short READ Response, 1 byte retur";
const bta = (sample) => ({ sample, mode: "LP_BTA" });
const esc = (sample, dt, data, ecc, extra = {}) => ({ sample, mode: "LP_ESC", action: "LPDT", vc: "00", dt, data, ecc, ...extra });

const ROWS = [
    esc("-9", READ, ["DA", "00"], "1F"),
    bta("1022"),
    esc("1207", RESPONSE, ["40", "00"], "38"),
    bta("2269"),
    esc("4158", READ, ["DB", "00"], "05"),
    bta("5189"),
    esc("5374", RESPONSE, ["40", "00"], "38"),
    bta("6428"),
    esc("8314", READ, ["DC", "00"], "20"),
    bta("9345"),
    esc("9522", RESPONSE, ["24", "00"], "18"),
    bta("10579"),
    esc("13366", "Generic Long Write (29)", ["F0", "5A", "5A"], "1A", { wc: "0003", crc: "665F" }),
];

const Cell = ({ bg, children }) => (
    <td className={`h-4 p-0 pt-[2px] pl-[6px] leading-[13px] border-l border-b border-[#f0f0f0] whitespace-nowrap ${bg}`}>{children}</td>
);

const PacketTable = () => (
    <section className={`${MONO} text-xs pl-[5px] pr-1`}>
        <div className="flex">
            <div className="flex-1 min-w-0 h-[237px] overflow-hidden border-t border-l border-t-[#a0a0a0] border-l-[#a0a0a0] border-b border-b-[#e3e3e3]">
                <div className="border-t border-l border-[#696969]">
                    <table className="w-full table-fixed border-separate border-spacing-0">
                        <thead>
                            <tr>
                                {COLUMNS.map(([name, w]) => (
                                    <th key={name} scope="col" className={`${w} p-0 font-normal text-left`}>
                                        <div className="h-[18px] leading-[22px] pl-[6px] border-r border-b border-[#a0a0a0]">{name}</div>
                                        <div className="h-[3px] border-t border-white" />
                                    </th>
                                ))}
                                <td className="p-0">
                                    <div className="h-[18px] border-b border-[#a0a0a0]" />
                                    <div className="h-[3px] border-t border-white" />
                                </td>
                            </tr>
                        </thead>
                        <tbody>
                            {ROWS.map((r, i) => (
                                <tr key={r.sample}>
                                    <td className="h-4 p-0 pt-[2px] pl-[6px] leading-[13px] border-l-[3px] border-b border-[#f0f0f0] bg-white relative">
                                        {i === 0 && (
                                            <svg width="8" height="15" className="absolute left-0 top-0" aria-hidden="true">
                                                <path d="M0 0h8L0 8z" fill="#00f" />
                                                <path d="M0 7l8 8H0z" fill="#f00" />
                                            </svg>
                                        )}
                                        {r.sample}
                                    </td>
                                    <Cell bg={i === 0 ? "bg-[#ffff00]" : "bg-[#ffcc99]"}>{r.mode}</Cell>
                                    <Cell bg="bg-[#ffff99]">{r.action}</Cell>
                                    <Cell bg="bg-[#ccffcc]">{r.vc}</Cell>
                                    <Cell bg="bg-[#ccffcc]">{r.dt}</Cell>
                                    <Cell bg="bg-[#ccffff]">{r.wc}</Cell>
                                    {Array.from({ length: 8 }, (_, n) => (
                                        <Cell key={n} bg="bg-[#99ccff]">{r.data?.[n]}</Cell>
                                    ))}
                                    <Cell bg={r.ecc ? "bg-[#00ff00]" : "bg-white"}>{r.ecc}</Cell>
                                    <Cell bg={r.crc ? "bg-[#00ff00]" : "bg-white"}>{r.crc}</Cell>
                                    <td />
                                </tr>
                            ))}
                        </tbody>
                    </table>
                </div>
            </div>
            <div className="w-4 ml-px shrink-0 flex flex-col bg-[#f8f8f8]">
                <ScrollArrow dir="up" />
                <Thumb className="h-[11px]" />
                <div className="mt-auto" />
                <ScrollArrow dir="down" />
            </div>
        </div>
        <div className="flex mt-px mr-[17px] h-4 bg-[#f8f8f8]">
            <ScrollArrow dir="left" />
            <Thumb className="w-[83px]" />
            <div className="ml-auto" />
            <ScrollArrow dir="right" />
        </div>
    </section>
);

const READOUTS = [
    { top: ["T", "bg-[#f00]"], bottom: ["A", "bg-[#0f0]"], value: "-3.08 S" },
    { top: ["A", "bg-[#0f0]"], bottom: ["B", "bg-[#ff0]"], value: "51.315 us" },
    { top: ["A", "bg-[#0f0]"], bottom: ["T", "bg-[#f00]"], value: "3.08 S" },
];

const StatusBar = () => (
    <footer className={`${TAHOMA} mt-[11px] border-t border-[#808080] shadow-[inset_0_1px_#fff] pt-[3px] pb-1 px-[2px] flex items-stretch h-[37px]`}>
        <div className={`flex-1 min-w-0 h-[29px] ${SUNKEN}`} />
        <div className="w-[42px] shrink-0 flex items-center justify-center">
            <Icon w={24} h={26}>
                <circle cx="11" cy="12" r="10" fill="#3a70c8" />
                <path d="M4 7c3-4 6-4 8-4 0 3-3 3-3 6s-3 3-5 1zM13 8c3-2 6 0 7 2 0 5-3 8-5 9-1-3-4-6-2-11zM3 14c3 0 5 3 5 6-3-1-5-3-5-6z" fill="#a8d8a0" />
                <path d="M12 7h5v9h4l-6.500 8L8 16h4z" fill="#ffe820" stroke="#b09000" strokeWidth="0.7" />
            </Icon>
        </div>
        <div className="shrink-0 flex gap-[7px] mr-1">
            {READOUTS.map((r) => (
                <div key={r.value} className="w-[163px] flex h-[29px]">
                    <div className="w-[13px] flex flex-col justify-between text-[10px] font-bold leading-[13px] text-center">
                        <span className={`h-[13px] ${r.top[1]}`}>{r.top[0]}</span>
                        <span className={`h-[13px] ${r.bottom[1]}`}>{r.bottom[0]}</span>
                    </div>
                    <output className={`flex-1 text-[13px] font-bold leading-[30px] text-right ${SUNKEN}`}>{r.value}</output>
                </div>
            ))}
        </div>
        <div className="w-[58px] h-[29px] shrink-0 bg-[#c0c0c0] border border-[#a0a0a0] border-r-[#696969] border-b-[#696969]">
            <Icon w={56} h={27}>
                <circle cx="9" cy="13" r="7.500" fill="#e8e8e8" stroke="#e01010" strokeWidth="2.200" />
                <path d="M9 8v5.500h5" fill="none" stroke="#000" strokeWidth="1.800" />
                <path d="M19.500 4v18M37.500 4v18" stroke="#888" />
                <path d="M21 20.500h3V5.500h4v15h4V5.500h4" fill="none" stroke="#888" strokeWidth="1.400" />
                <path d="M42.500 21V5M47.500 21V5M52.500 21V5M40 9l2.500-4L45 9M45 9l2.500-4L50 9M50 9l2.500-4L55 9" fill="none" stroke="#888" strokeWidth="1.200" />
            </Icon>
        </div>
    </footer>
);

const App = () => (
    <div className="min-h-screen flex flex-col bg-[#f0f0f0] text-black overflow-hidden">
        <Defs />
        <TitleBar />
        <Toolbar />
        <Ruler />
        <WavePanel />
        <Overview />
        <BusToolbar />
        <PacketTable />
        <StatusBar />
    </div>
);

export default App;
